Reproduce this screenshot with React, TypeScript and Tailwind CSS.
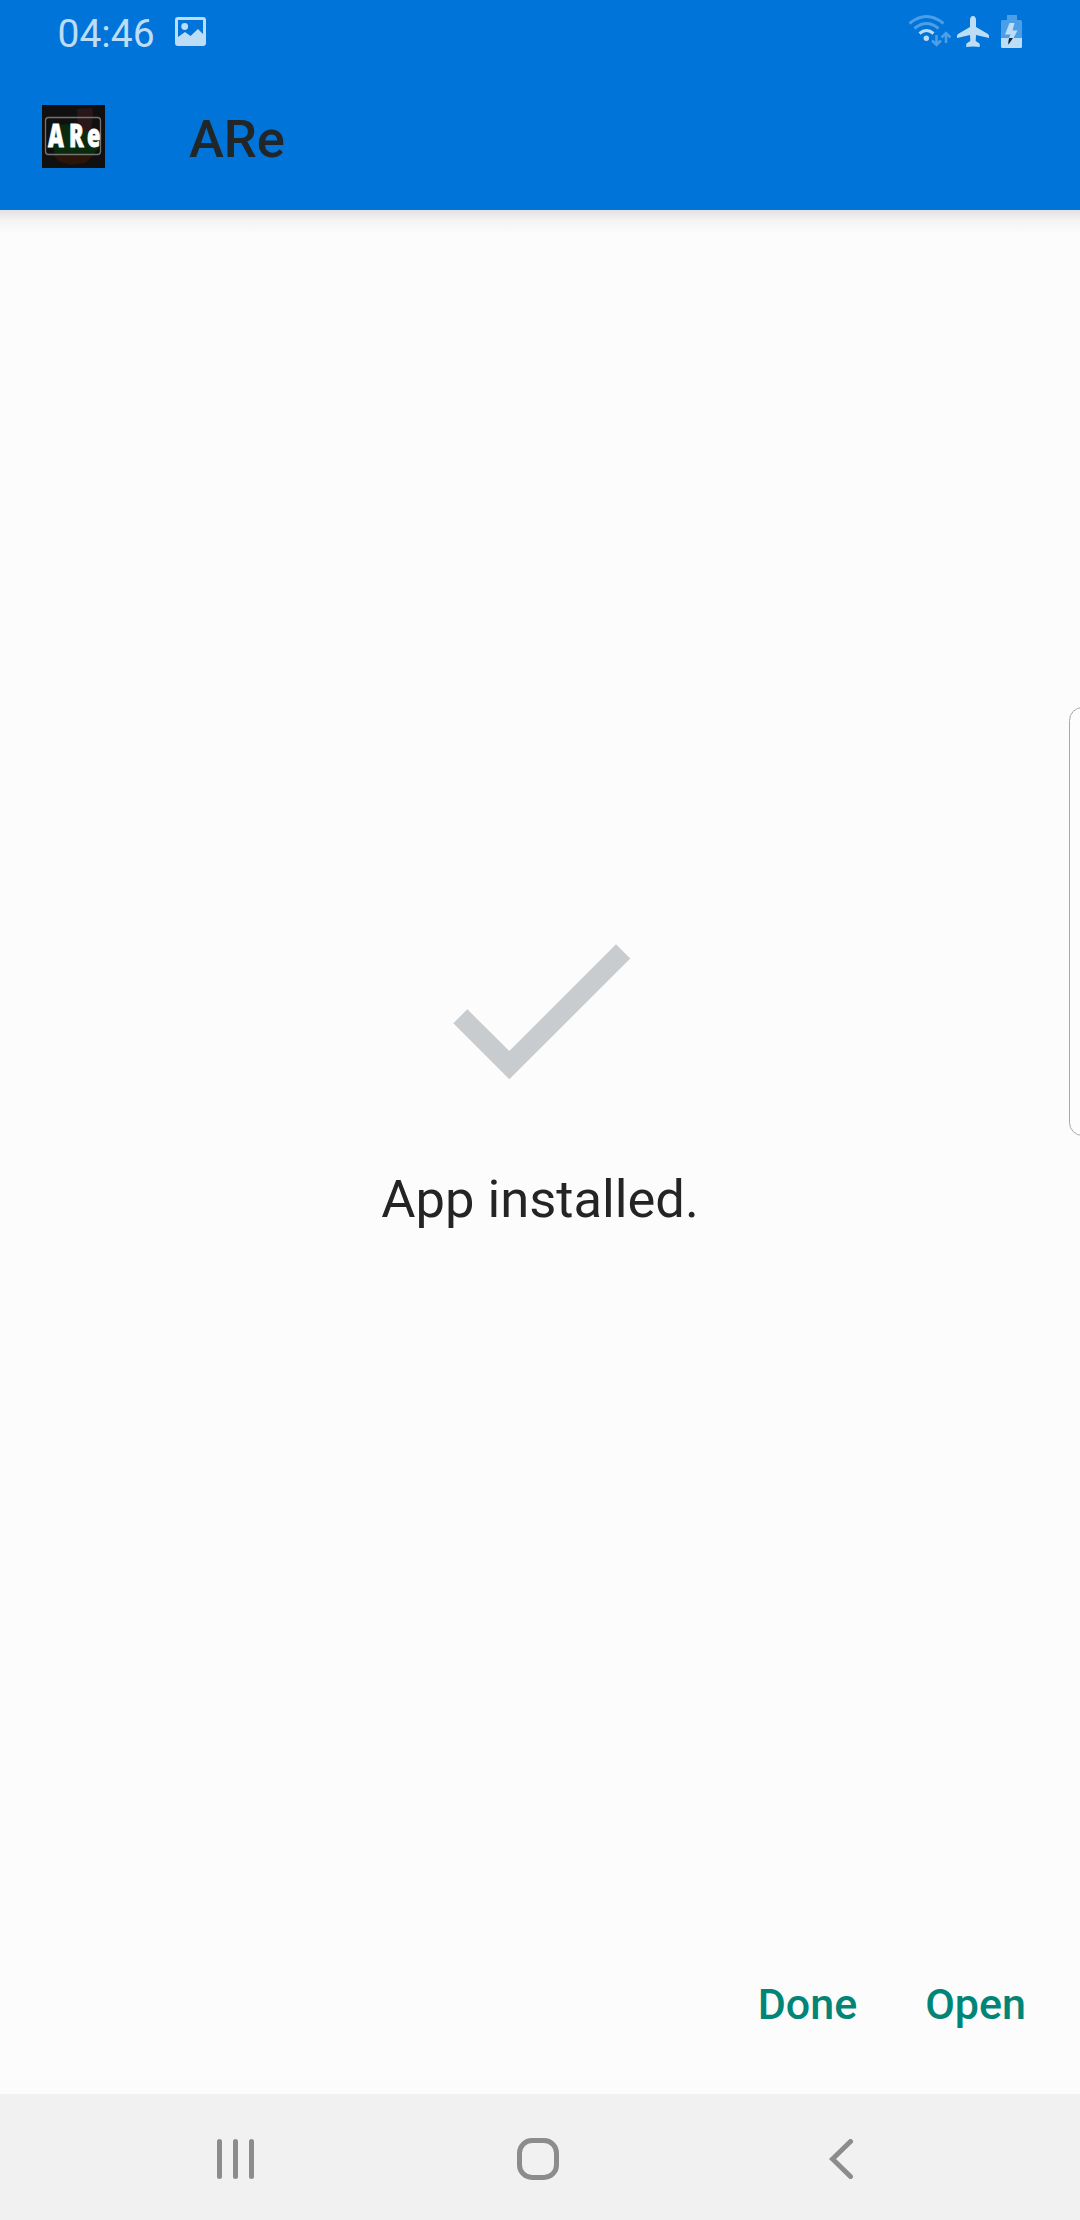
function StatusBar() {
  return (
    <div className="flex h-16 items-start">
      <span className="ml-[57.5px] mt-[11px] w-[97px] text-[39px] leading-[47px] text-[#bddcf6]">04:46</span>
      <svg className="ml-[20.5px] mt-[17px]" width="31" height="29" viewBox="0 0 31 29">
        <path fill="#bddcf6" fillRule="evenodd" d="M3 0H28Q31 0 31 3V26Q31 29 28 29H3Q0 29 0 26V3Q0 0 3 0ZM3 3V20L10 15L15.500 19L23 12L28 17V3Z" />
        <circle cx="9.700" cy="9.500" r="3.400" fill="#bddcf6" />
      </svg>
      <svg className="ml-auto mr-[48px]" width="134" height="64" viewBox="898 0 134 64">
        <g fill="none" strokeWidth="3">
          <path stroke="#4c9fe6" d="M909.500 23.500Q926.500 9.500 943.500 23.500M914.500 28.500Q926.500 18.500 938.500 28.500" />
          <path stroke="#bddcf6" d="M919.500 33.500Q926.500 27.500 933.500 33.500" />
          <path stroke="#4c9fe6" strokeWidth="2.600" d="M936.500 35V45M932 40.500L936.500 45L941 40.500M946 43V33M941.500 37.500L946 33L950.500 37.500" />
        </g>
        <circle cx="926.300" cy="38.300" r="2.700" fill="#bddcf6" />
        <path fill="#bddcf6" d="M973 16C975 16 976 18 976 20V27L988 34Q989.500 35 989 38L976 35L975.700 41L979.500 43.500Q980 45 979.700 47L973 46.500L966.300 47Q966 45 966.500 43.500L970.300 41L970 35L957 38Q956.500 35 958 34L970 27V20C970 18 971 16 973 16Z" />
        <path fill="#4c9fe6" d="M1007 15H1017V20H1020.500Q1022 20 1022 21.500V38H1001V21.500Q1001 20 1002.500 20H1007Z" />
        <path fill="#bddcf6" d="M1001 38H1022V46.500Q1022 48 1020.500 48H1002.500Q1001 48 1001 46.500Z" />
        <path fill="#bddcf6" d="M1009.500 23H1014.500L1012.500 30.500H1017.500L1013.500 38H1009L1010.500 34.500H1005Z" />
        <path fill="#13253a" d="M1009.200 38H1013L1008.500 44.500Q1007.800 43 1009.200 38Z" />
      </svg>
    </div>
  );
}

function AppIcon() {
  return (
    <div className="relative size-[63px] overflow-hidden bg-[#101010]">
      <svg className="absolute inset-0" width="63" height="63" viewBox="0 0 63 63">
        <path fill="#291719" d="M35 4L50 3L51 7L49 28H36Z" />
        <path fill="#0a2a0d" d="M8 33L18 20L26 19L30 29L43 25L57 34V43L50 51H14Z" />
        <path fill="#2b1408" d="M11 50H52L43 58L29 60L18 57Z" />
        <rect x="3.500" y="12.500" width="55" height="37" rx="3" fill="none" stroke="#737373" strokeWidth="1.300" />
      </svg>
      <div className="absolute left-[6px] top-[15px] flex h-[30px] w-[54px] items-center font-['Open_Sans'] text-[31px] font-extrabold leading-[30px] text-white [-webkit-text-stroke:0.8px_white]">
        <span className="w-[20.5px] origin-left scale-x-70">A</span>
        <span className="w-[18px] origin-left scale-x-70">R</span>
        <span className="origin-left scale-x-70">e</span>
      </div>
    </div>
  );
}

export default function App() {
  return (
    <div className="relative flex h-[2220px] w-[1080px] flex-col overflow-hidden bg-[#fcfcfc] font-[Roboto,sans-serif]">
      <header className="h-[210px] shrink-0 bg-[#0074d8]">
        <StatusBar />
        <div className="flex items-start pl-[42px] pt-[41px]">
          <AppIcon />
          <h1 className="ml-[84px] mt-[3px] text-[52.5px] font-medium leading-[62px] text-[#212629]">ARe</h1>
        </div>
      </header>
      <div className="h-[24px] shrink-0 bg-linear-to-b from-[#e1e1e1] via-[#f4f4f4] via-45% to-[#fcfcfc]" />
      <main className="flex flex-1 flex-col items-center pt-[710px]">
        <svg className="ml-[4px]" width="178" height="136" viewBox="0 0 178 136">
          <path fill="#c8cccf" d="M14.300 65.300L56.300 107L163 0.300L177.300 14.500L56.300 135.300L0.300 79.300Z" />
        </svg>
        <p className="mt-[88px] text-[52.5px] leading-[62px] text-[#242424]">App installed.</p>
      </main>
      <footer className="flex h-[115px] shrink-0 items-start justify-end gap-[68px] pr-[54px] text-[43px] font-medium leading-[50px] text-[#008577]">
        <button>Done</button>
        <button>Open</button>
      </footer>
      <nav className="flex h-[126px] shrink-0 items-start bg-[#f1f1f1] pt-[44px]">
        <div className="ml-[217px] mt-px flex gap-[11px]">
          <i className="h-[40px] w-[5px] rounded-full bg-[#8c8c8c]" />
          <i className="h-[40px] w-[5px] rounded-full bg-[#8c8c8c]" />
          <i className="h-[40px] w-[5px] rounded-full bg-[#8c8c8c]" />
        </div>
        <div className="ml-[263px] size-[42px] rounded-[15px] border-[5px] border-[#8c8c8c]" />
        <svg className="ml-[270px] mt-px" width="26" height="40" viewBox="0 0 26 40">
          <path d="M21.500 2.500L3.500 20L21.500 37.500" fill="none" stroke="#8c8c8c" strokeWidth="5" strokeLinecap="round" />
        </svg>
      </nav>
      <aside className="absolute -right-4 top-[707px] h-[429px] w-[27px] rounded-[17px] border border-[#a8a8a8] bg-[#fdfdfd]" />
    </div>
  );
}
